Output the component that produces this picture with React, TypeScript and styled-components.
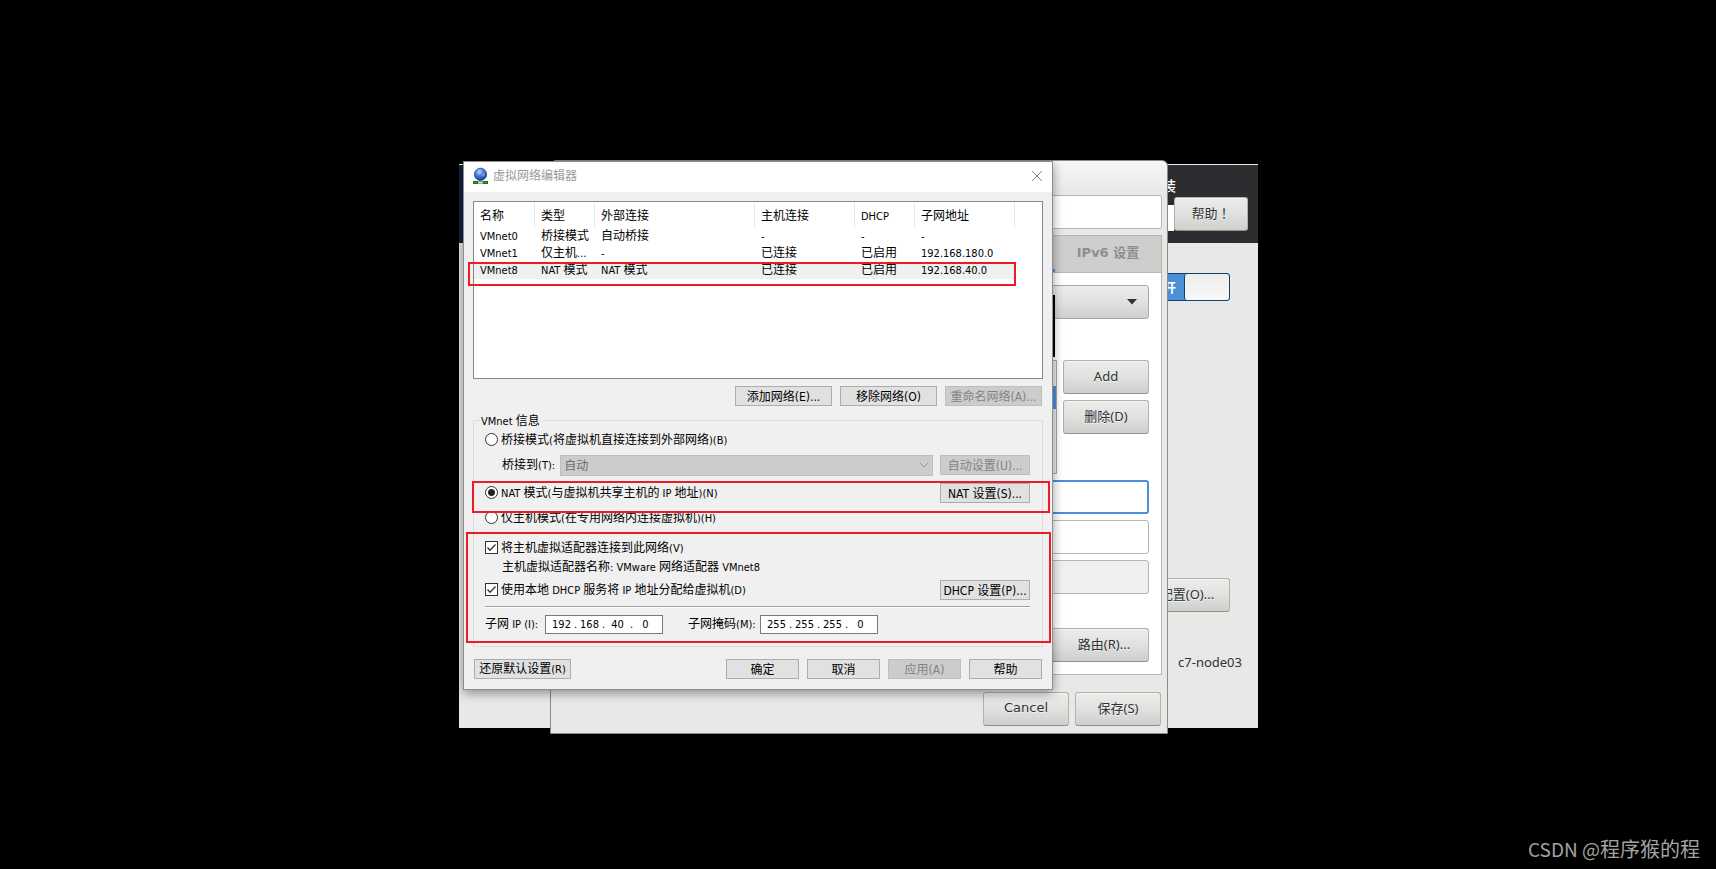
import React from "react";
import styled, { createGlobalStyle, css } from "styled-components";

const GlobalStyle = createGlobalStyle`
  *, *::before, *::after { box-sizing: border-box; }
  body { margin: 0; background: #000; }
  button, input, select { font: inherit; color: inherit; margin: 0; }
`;

const winFont = `"DejaVu Sans Condensed", "Noto Sans CJK SC", sans-serif`;
const gtkFont = `"Noto Sans", "Noto Sans CJK SC", sans-serif`;
const gtkFace = "linear-gradient(#ececeb, #e2e2e1 45%, #cfcfcd)";

const Desktop = styled.main`
  position: relative;
  display: flex;
  justify-content: center;
  min-height: 100vh;
  background: #000;
  overflow: hidden;
`;

const Screen = styled.div`
  position: relative;
  flex: none;
  width: 800px;
`;

/* ---------- installer behind the windows ---------- */

const Installer = styled.section`
  position: absolute;
  left: 1px;
  right: 0;
  top: 164px;
  background: #e8e8e7;
  font: 13px/18px ${gtkFont};
  color: #2e3436;
  padding-bottom: 56px;
`;

const InstallerHeader = styled.header`
  display: flex;
  flex-direction: column;
  align-items: flex-end;
  height: 79px;
  padding: 12px 10px 0 0;
  border-top: 1px solid #e8e8e7;
  background: linear-gradient(90deg, #14233f, #242a34 60%, #2c2d2f);
`;

const InstallerTitle = styled.h1`
  margin: 0 72px 2px 0;
  font-size: 14px;
  line-height: 18px;
  font-weight: 500;
  color: #fff;
`;

const HeaderTools = styled.div`
  display: flex;
  align-items: flex-end;
`;

const KeyboardSlot = styled.div`
  width: 60px;
  height: 26px;
  background: #fff;
`;

const InstallerBody = styled.div`
  display: flex;
  flex-direction: column;
  align-items: flex-end;
  padding: 30px 28px 0 0;
`;

const Switch = styled.button`
  display: flex;
  justify-content: space-between;
  align-items: center;
  width: 80px;
  height: 28px;
  padding: 0 0 0 12px;
  border: 1px solid #12406f;
  border-radius: 3px;
  background: #4a90d9;
  color: #fff;
  font-weight: 700;
`;

const Knob = styled.span`
  width: 45px;
  height: 26px;
  border-left: 1px solid #12406f;
  border-radius: 3px;
  background: linear-gradient(#ededec, #f8f8f8);
`;

const HostName = styled.p`
  margin: 40px -12px 0 0;
  line-height: 20px;
`;

const GtkButton = styled.button<{ $w?: number; $dejavu?: boolean }>`
  width: ${(p) => p.$w ?? 86}px;
  height: 34px;
  padding: 0 0 2px;
  border: 1px solid #b0b0ad;
  border-bottom-color: #8f8f8c;
  border-radius: 3px;
  background: ${gtkFace};
  box-shadow: inset 0 1px #f4f4f3;
  color: #2e3436;
  text-shadow: 0 1px #f2f2f2;
  white-space: nowrap;
  ${(p) => p.$dejavu && css`font-family: "DejaVu Sans", sans-serif;`}
`;

const HelpButton = styled(GtkButton)`
  font-family: "Noto Sans CJK TC", sans-serif;
`;

const ConfigureButton = styled(GtkButton)`
  margin-top: 277px;
  padding-left: 12px;
`;

/* ---------- connection editor ---------- */

const Editor = styled.section`
  position: absolute;
  left: 92px;
  top: 160px;
  width: 618px;
  padding: 0 5px 7px;
  border: 1px solid #8b8b88;
  border-radius: 6px 6px 0 0;
  background: linear-gradient(#f6f6f6, #e8e8e7 34px);
  font: 13px/18px ${gtkFont};
  color: #2e3436;
`;

const EditorTitle = styled.div`
  height: 34px;
`;

const GtkInput = styled.input<{ $focus?: boolean }>`
  display: block;
  width: 100%;
  height: 34px;
  padding: 0 8px;
  border: ${(p) => (p.$focus ? "2px solid #4a90d9" : "1px solid #b6b6b3")};
  border-radius: 3px;
  background: #fff;
  outline: none;
  &:disabled { background: #f0f0f0; }
`;

const Notebook = styled.div`
  margin-top: 6px;
  border: 1px solid #b6b6b3;
  background: #fff;
`;

const TabBar = styled.div`
  display: flex;
  justify-content: flex-end;
  height: 37px;
  border-bottom: 1px solid #b6b6b3;
  background: #cececd;
`;

const Tab = styled.button<{ $active?: boolean }>`
  width: 106px;
  height: 36px;
  padding: 0;
  border: 0;
  border-bottom: 3px solid ${(p) => (p.$active ? "#4a90d9" : "transparent")};
  background: none;
  font: bold 13px/18px "DejaVu Sans", "Noto Sans CJK SC", sans-serif;
  color: #8b8e8f;
`;

const Page = styled.div`
  display: flex;
  flex-direction: column;
  gap: 6px;
  padding: 12px;
`;

const MethodCombo = styled.button`
  display: flex;
  align-items: center;
  justify-content: flex-end;
  width: 100%;
  height: 34px;
  margin-bottom: 35px;
  padding: 0 11px;
  border: 1px solid #a9a9a6;
  border-radius: 3px;
  background: ${gtkFace};
`;

const AddressArea = styled.div`
  display: flex;
  gap: 6px;
`;

const AddressList = styled.div`
  flex: 1;
  height: 114px;
  padding-top: 25px;
  border: 1px solid #a9a9a6;
  background: #ededec;
`;

const AddressRow = styled.div`
  height: 23px;
  background: #4a90d9;
`;

const Stack = styled.div`
  display: flex;
  flex-direction: column;
  gap: 6px;
`;

const RoutesButton = styled(GtkButton)`
  align-self: flex-end;
  margin-top: 28px;
  padding-left: 20px;
`;

const EditorActions = styled.div`
  display: flex;
  justify-content: flex-end;
  gap: 6px;
  margin-top: 17px;
  padding-right: 1px;
`;

const MenuEdge = styled.div`
  position: absolute;
  left: 480px;
  top: 134px;
  width: 24px;
  height: 62px;
  background: #000;
`;

/* ---------- virtual network editor ---------- */

const Dialog = styled.section`
  position: absolute;
  left: 5px;
  top: 161px;
  width: 590px;
  border: 1px solid #8e8e8e;
  background: #f0f0f0;
  box-shadow: 0 3px 10px rgba(0, 0, 0, 0.4);
  font: 12px/16px ${winFont};
  color: #000;
`;

const Latin = styled.span`
  font-size: 11px;
`;

const TitleBar = styled.header`
  display: flex;
  align-items: center;
  height: 30px;
  padding: 0 9px 2px;
  background: #fff;
  color: #999;
`;

const TitleText = styled.h2`
  flex: 1;
  margin: 0 0 0 5px;
  font-size: 12px;
  line-height: 16px;
  font-weight: 400;
`;

const CloseButton = styled.button`
  display: flex;
  padding: 0;
  border: 0;
  background: none;
`;

const DialogBody = styled.div`
  padding: 9px 9px 10px;
`;

const ListView = styled.div`
  height: 178px;
  border: 1px solid #828790;
  background: #fff;
`;

const NetTable = styled.table`
  width: 541px;
  table-layout: fixed;
  border-collapse: separate;
  border-spacing: 0;
  text-align: left;
  white-space: nowrap;
`;

const HeadCell = styled.th<{ $w: number }>`
  width: ${(p) => p.$w}px;
  height: 26px;
  padding: 2px 0 0 6px;
  background: linear-gradient(#e5e5e5, #e5e5e5) right 1px / 1px 24px no-repeat;
  font-weight: 400;
`;

const Cell = styled.td<{ $on: boolean }>`
  height: 17px;
  padding: 0 0 0 6px;
  line-height: 17px;
  background: ${(p) => (p.$on ? "#f0f0f0" : "none")};
`;

const ButtonRow = styled.div<{ $top: number }>`
  display: flex;
  justify-content: flex-end;
  gap: 8px;
  margin-top: ${(p) => p.$top}px;
  padding: 0 1px;
`;

const WinButton = styled.button<{ $w: number; $left?: boolean }>`
  width: ${(p) => p.$w}px;
  height: 20px;
  padding: 1px 0 0;
  border: 1px solid #adadad;
  background: #e1e1e1;
  line-height: 16px;
  white-space: nowrap;
  ${(p) => p.$left && css`margin-right: auto;`}
  &:disabled {
    border-color: #bfbfbf;
    background: #ccc;
    color: #838383;
  }
`;

const Group = styled.fieldset`
  min-width: 0;
  margin: 7px 0 0;
  padding: 0 0 6px;
  border: 1px solid #dcdcdc;
`;

const Legend = styled.legend`
  height: 14px;
  margin-left: 6px;
  padding: 0 3px 0 1px;
  line-height: 16px;
`;

const Row = styled.div<{ $h: number; $top?: number; $indent?: boolean }>`
  display: flex;
  align-items: center;
  justify-content: space-between;
  height: ${(p) => p.$h}px;
  margin-top: ${(p) => p.$top ?? 0}px;
  padding: 0 12px 0 ${(p) => (p.$indent ? 28 : 11)}px;
  white-space: nowrap;
`;

const Option = styled.label`
  display: flex;
  align-items: center;
  gap: 3px;
`;

const Radio = styled.input.attrs({ type: "radio" })`
  appearance: none;
  width: 13px;
  height: 13px;
  border: 1px solid #333;
  border-radius: 50%;
  background: #fff;
  && { margin-bottom: 1px; }
  &:checked { background: radial-gradient(circle, #222 3px, #fff 4px); }
`;

const CheckInput = styled.input.attrs({ type: "checkbox" })`
  appearance: none;
  display: block;
  width: 13px;
  height: 13px;
  border: 1px solid #333;
  background: #fff;
`;

const CheckBox = styled.span`
  position: relative;
  display: block;
  margin-bottom: 1px;
  svg { position: absolute; left: 0; top: 0; pointer-events: none; }
`;

const SelectWrap = styled.div`
  position: relative;
  flex: 1;
  margin: 0 7px 0 5px;
  svg { position: absolute; right: 4px; top: 7px; pointer-events: none; }
`;

const BridgeSelect = styled.select`
  display: block;
  appearance: none;
  width: 100%;
  height: 21px;
  padding: 1px 3px 0;
  border: 1px solid #bfbfbf;
  border-radius: 0;
  background: #ccc;
  &:disabled { color: #6d6d6d; opacity: 1; }
`;

const Divider = styled.hr`
  height: 2px;
  margin: 3px 12px 0 11px;
  border: 0;
  border-top: 1px solid #a0a0a0;
  background: #fff;
`;

const AddressFields = styled.div`
  display: flex;
  align-items: center;
`;

const FieldLabel = styled.span<{ $w: number }>`
  width: ${(p) => p.$w}px;
  padding-top: 1px;
`;

const IpBox = styled.div`
  display: flex;
  align-items: center;
  width: 118px;
  height: 19px;
  margin-right: 25px;
  padding: 1px 2px 0 3px;
  border: 1px solid #7a7a7a;
  background: #fff;
  font-size: 11px;
`;

const Octet = styled.input`
  width: 25px;
  height: 16px;
  padding: 0;
  border: 0;
  background: none;
  text-align: center;
  outline: none;
`;

const Dot = styled.span`
  width: 3px;
`;

const Highlight = styled.div<{ $l: number; $t: number; $w: number; $h: number }>`
  position: absolute;
  left: ${(p) => p.$l}px;
  top: ${(p) => p.$t}px;
  width: ${(p) => p.$w}px;
  height: ${(p) => p.$h}px;
  border: 2px solid #ed1c24;
  pointer-events: none;
`;

const Watermark = styled.div`
  position: absolute;
  right: 16px;
  bottom: 5px;
  font: 20px/30px "Noto Sans CJK SC", sans-serif;
  color: #a3a3a3;
`;

const WatermarkSite = styled.span`
  font-size: 19px;
`;

/* Latin runs are set one size smaller than the Chinese characters beside them. */
function Mixed({ text }: { text: string }) {
  return (
    <>
      {text.split(/([\x20-\x7e]+)/).map((run, i) =>
        i % 2 ? <Latin key={i}>{run}</Latin> : run
      )}
    </>
  );
}

function Tick() {
  return (
    <svg width="13" height="13" viewBox="0 0 13 13">
      <path d="M2.5 6.5 5 9.2 10.5 3.5" fill="none" stroke="#333" strokeWidth="1.3" />
    </svg>
  );
}

function NetworkIcon() {
  return (
    <svg width="15" height="18" viewBox="0 0 15 18">
      <defs>
        <radialGradient id="globe" cx="0.42" cy="0.3" r="0.7">
          <stop offset="0" stopColor="#d5e6ff" />
          <stop offset="0.35" stopColor="#5f8be4" />
          <stop offset="1" stopColor="#123a9c" />
        </radialGradient>
      </defs>
      <path d="M5.500 12h4v3h-4z" fill="#bbb" />
      <circle cx="7.500" cy="7.300" r="6.200" fill="url(#globe)" stroke="#1c3f94" strokeWidth="0.6" />
      <path d="M4 4.5 6 3l2 1-1 3-2 1zM9 7l2-1 1 2-2 2z" fill="#9dbcf2" opacity="0.6" />
      <path d="M0 14h5v3H0zM10 14h5v3h-5z" fill="#0fae0f" />
      <path d="M.5 14.500h4v2h-4zM10.500 14.500h4v2h-4z" fill="none" stroke="#0a7a0a" />
      <path d="M5 14.500h5v2H5z" fill="#ddd" stroke="#777" strokeWidth="0.6" />
    </svg>
  );
}

const columns: [string, number][] = [
  ["名称", 61],
  ["类型", 60],
  ["外部连接", 160],
  ["主机连接", 100],
  ["DHCP", 60],
  ["子网地址", 100],
];

const networks = [
  ["VMnet0", "桥接模式", "自动桥接", "-", "-", "-"],
  ["VMnet1", "仅主机...", "-", "已连接", "已启用", "192.168.180.0"],
  ["VMnet8", "NAT 模式", "NAT 模式", "已连接", "已启用", "192.168.40.0"],
];

function IpField({ label, parts }: { label: string; parts: string[] }) {
  return (
    <IpBox role="group" aria-label={label}>
      {parts.map((part, i) => (
        <React.Fragment key={i}>
          {i > 0 && <Dot>.</Dot>}
          <Octet aria-label={`${label} ${i + 1}`} defaultValue={part} />
        </React.Fragment>
      ))}
    </IpBox>
  );
}

function InstallerScreen() {
  return (
    <Installer>
      <InstallerHeader>
        <InstallerTitle>装</InstallerTitle>
        <HeaderTools>
          <KeyboardSlot />
          <HelpButton $w={74}>帮助！</HelpButton>
        </HeaderTools>
      </InstallerHeader>
      <InstallerBody>
        <Switch role="switch" aria-checked="true">
          开<Knob />
        </Switch>
        <ConfigureButton $w={98}>配置(O)...</ConfigureButton>
        <HostName>c7-node03</HostName>
      </InstallerBody>
    </Installer>
  );
}

function ConnectionEditor() {
  return (
    <Editor>
      <EditorTitle />
      <GtkInput aria-label="连接名称" />
      <Notebook>
        <TabBar>
          <Tab $active aria-label="IPv4" />
          <Tab>IPv6 设置</Tab>
        </TabBar>
        <Page>
          <MethodCombo aria-label="方法">
            <svg width="10" height="6" viewBox="0 0 10 6">
              <path d="M0 0h10L5 5.500z" fill="#2e3436" />
            </svg>
          </MethodCombo>
          <AddressArea>
            <AddressList>
              <AddressRow />
            </AddressList>
            <Stack>
              <GtkButton>Add</GtkButton>
              <GtkButton>删除(D)</GtkButton>
            </Stack>
          </AddressArea>
          <GtkInput $focus aria-label="DNS" />
          <GtkInput aria-label="搜索域" />
          <GtkInput disabled aria-label="DHCP ID" />
          <RoutesButton $w={110}>路由(R)...</RoutesButton>
        </Page>
      </Notebook>
      <EditorActions>
        <GtkButton $dejavu>Cancel</GtkButton>
        <GtkButton>保存(S)</GtkButton>
      </EditorActions>
      <MenuEdge />
    </Editor>
  );
}

function NetworkEditor() {
  return (
    <Dialog>
      <TitleBar>
        <NetworkIcon />
        <TitleText>虚拟网络编辑器</TitleText>
        <CloseButton aria-label="关闭">
          <svg width="12" height="12" viewBox="0 0 12 12">
            <path d="M1 1l10 10M11 1 1 11" stroke="#8a8a8a" />
          </svg>
        </CloseButton>
      </TitleBar>
      <DialogBody>
        <ListView>
          <NetTable>
            <thead>
              <tr>
                {columns.map(([name, w]) => (
                  <HeadCell key={name} $w={w}><Mixed text={name} /></HeadCell>
                ))}
              </tr>
            </thead>
            <tbody>
              {networks.map((net, r) => (
                <tr key={net[0]}>
                  {net.map((value, c) => (
                    <Cell key={c} $on={r === 2}><Mixed text={value} /></Cell>
                  ))}
                </tr>
              ))}
            </tbody>
          </NetTable>
        </ListView>
        <ButtonRow $top={7}>
          <WinButton $w={97}>添加网络(E)...</WinButton>
          <WinButton $w={97}>移除网络(O)</WinButton>
          <WinButton $w={97} disabled>重命名网络(A)...</WinButton>
        </ButtonRow>
        <Group>
          <Legend><Mixed text="VMnet 信息" /></Legend>
          <Row $h={26}>
            <Option>
              <Radio name="mode" />
              <span><Mixed text="桥接模式(将虚拟机直接连接到外部网络)(B)" /></span>
            </Option>
          </Row>
          <Row $h={24} $indent>
            <label htmlFor="bridge"><Mixed text="桥接到(T):" /></label>
            <SelectWrap>
              <BridgeSelect id="bridge" disabled>
                <option>自动</option>
              </BridgeSelect>
              <svg width="10" height="7" viewBox="0 0 10 7">
                <path d="M1 1l4 4 4-4" fill="none" stroke="#999" />
              </svg>
            </SelectWrap>
            <WinButton $w={90} disabled>自动设置(U)...</WinButton>
          </Row>
          <Row $h={32}>
            <Option>
              <Radio name="mode" defaultChecked />
              <span><Mixed text="NAT 模式(与虚拟机共享主机的 IP 地址)(N)" /></span>
            </Option>
            <WinButton $w={90}>NAT 设置(S)...</WinButton>
          </Row>
          <Row $h={18}>
            <Option>
              <Radio name="mode" />
              <span><Mixed text="仅主机模式(在专用网络内连接虚拟机)(H)" /></span>
            </Option>
          </Row>
          <Row $h={18} $top={12}>
            <Option>
              <CheckBox><CheckInput defaultChecked /><Tick /></CheckBox>
              <span><Mixed text="将主机虚拟适配器连接到此网络(V)" /></span>
            </Option>
          </Row>
          <Row $h={20} $indent>
            <span><Mixed text="主机虚拟适配器名称: VMware 网络适配器 VMnet8" /></span>
          </Row>
          <Row $h={26}>
            <Option>
              <CheckBox><CheckInput defaultChecked /><Tick /></CheckBox>
              <span><Mixed text="使用本地 DHCP 服务将 IP 地址分配给虚拟机(D)" /></span>
            </Option>
            <WinButton $w={90}>DHCP 设置(P)...</WinButton>
          </Row>
          <Divider />
          <Row $h={32}>
            <AddressFields>
              <FieldLabel $w={60}><Mixed text="子网 IP (I):" /></FieldLabel>
              <IpField label="子网 IP" parts={["192", "168", "40", "0"]} />
              <FieldLabel $w={72}><Mixed text="子网掩码(M):" /></FieldLabel>
              <IpField label="子网掩码" parts={["255", "255", "255", "0"]} />
            </AddressFields>
          </Row>
        </Group>
        <ButtonRow $top={12}>
          <WinButton $w={97} $left><Mixed text="还原默认设置(R)" /></WinButton>
          <WinButton $w={73}>确定</WinButton>
          <WinButton $w={73}>取消</WinButton>
          <WinButton $w={73} disabled>应用(A)</WinButton>
          <WinButton $w={73}>帮助</WinButton>
        </ButtonRow>
      </DialogBody>
    </Dialog>
  );
}

export default function App() {
  return (
    <>
      <GlobalStyle />
      <Desktop>
        <Screen>
          <InstallerScreen />
          <ConnectionEditor />
          <NetworkEditor />
          <Highlight $l={10} $t={262} $w={548} $h={24} />
          <Highlight $l={14} $t={481} $w={578} $h={32} />
          <Highlight $l={8} $t={532} $w={585} $h={111} />
        </Screen>
        <Watermark>
          <WatermarkSite>CSDN @</WatermarkSite>程序猴的程
        </Watermark>
      </Desktop>
    </>
  );
}
